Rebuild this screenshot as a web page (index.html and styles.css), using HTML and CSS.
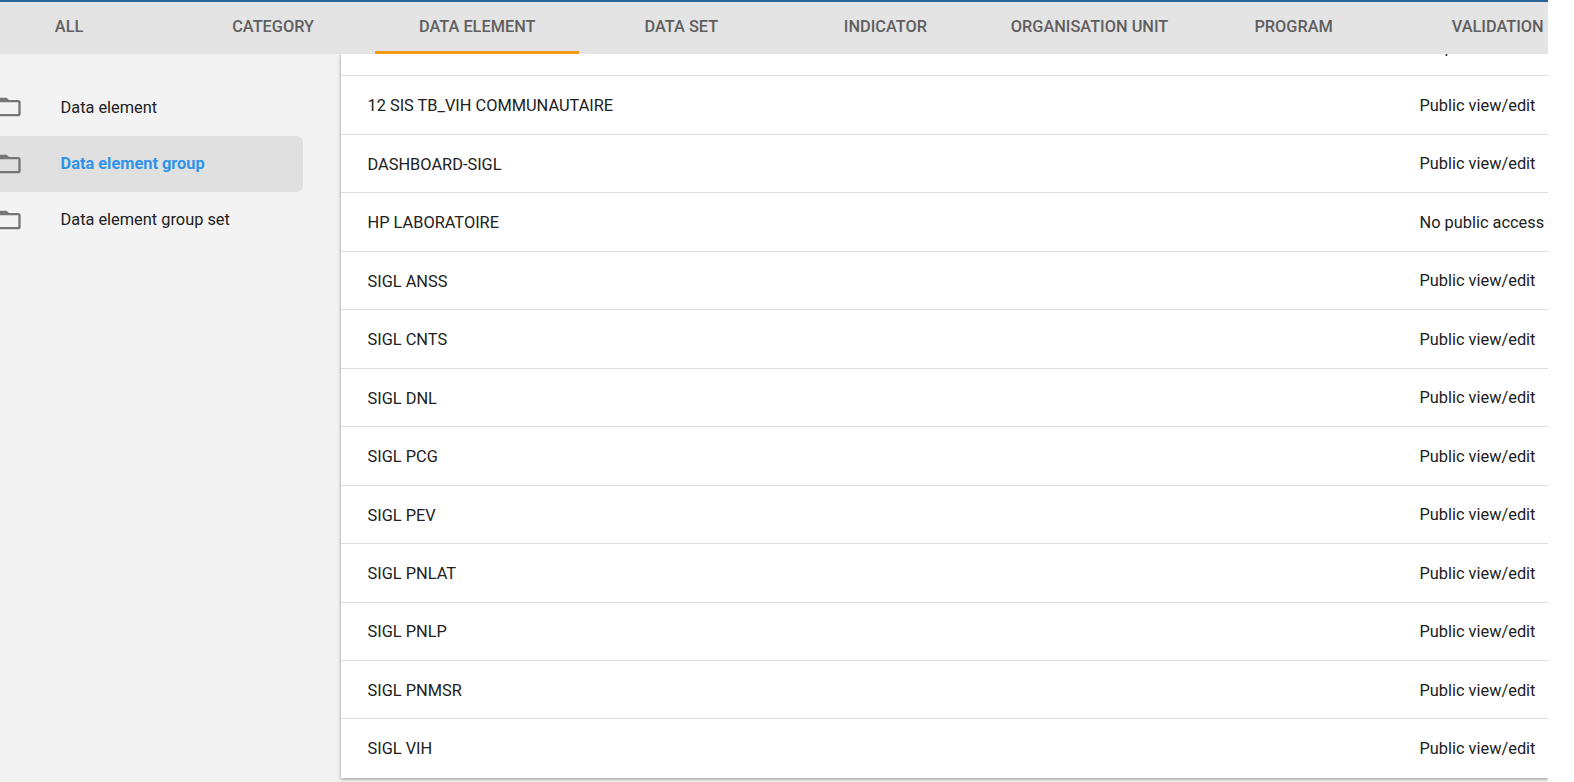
FILE: index.html
```
<!DOCTYPE html>
<html lang="en">
<head>
<meta charset="utf-8">
<title>Data element group</title>
<link rel="stylesheet" href="styles.css">
</head>
<body>
<div class="app">
  <nav class="tabs">
    <a class="tab">ALL</a>
    <a class="tab">CATEGORY</a>
    <a class="tab active">DATA ELEMENT</a>
    <a class="tab">DATA SET</a>
    <a class="tab">INDICATOR</a>
    <a class="tab">ORGANISATION UNIT</a>
    <a class="tab">PROGRAM</a>
    <a class="tab">VALIDATION</a>
  </nav>
  <div class="body">
    <aside class="sidebar">
      <a class="item"><svg class="folder" viewBox="0 0 24 24"><path d="M20 6h-8l-2-2H4c-1.100 0-1.990.9-1.990 2L2 18c0 1.100.9 2 2 2h16c1.100 0 2-.9 2-2V8c0-1.100-.9-2-2-2zm0 12H4V8h16v10z"/></svg><span class="label">Data element</span></a>
      <a class="item selected"><svg class="folder" viewBox="0 0 24 24"><path d="M20 6h-8l-2-2H4c-1.100 0-1.990.9-1.990 2L2 18c0 1.100.9 2 2 2h16c1.100 0 2-.9 2-2V8c0-1.100-.9-2-2-2zm0 12H4V8h16v10z"/></svg><span class="label">Data element group</span></a>
      <a class="item"><svg class="folder" viewBox="0 0 24 24"><path d="M20 6h-8l-2-2H4c-1.100 0-1.990.9-1.990 2L2 18c0 1.100.9 2 2 2h16c1.100 0 2-.9 2-2V8c0-1.100-.9-2-2-2zm0 12H4V8h16v10z"/></svg><span class="label">Data element group set</span></a>
    </aside>
    <main class="card">
      <div class="row"><span class="name"></span><span class="access">No public access</span></div>
      <div class="row"><span class="name">12 SIS TB_VIH COMMUNAUTAIRE</span><span class="access">Public view/edit</span></div>
      <div class="row"><span class="name">DASHBOARD-SIGL</span><span class="access">Public view/edit</span></div>
      <div class="row"><span class="name">HP LABORATOIRE</span><span class="access">No public access</span></div>
      <div class="row"><span class="name">SIGL ANSS</span><span class="access">Public view/edit</span></div>
      <div class="row"><span class="name">SIGL CNTS</span><span class="access">Public view/edit</span></div>
      <div class="row"><span class="name">SIGL DNL</span><span class="access">Public view/edit</span></div>
      <div class="row"><span class="name">SIGL PCG</span><span class="access">Public view/edit</span></div>
      <div class="row"><span class="name">SIGL PEV</span><span class="access">Public view/edit</span></div>
      <div class="row"><span class="name">SIGL PNLAT</span><span class="access">Public view/edit</span></div>
      <div class="row"><span class="name">SIGL PNLP</span><span class="access">Public view/edit</span></div>
      <div class="row"><span class="name">SIGL PNMSR</span><span class="access">Public view/edit</span></div>
      <div class="row"><span class="name">SIGL VIH</span><span class="access">Public view/edit</span></div>
    </main>
  </div>
</div>
</body>
</html>
```
FILE: styles.css
```
* { box-sizing: border-box; }
html, body { height: 782px; overflow: hidden; }
body {
  margin: 0;
  background: #fff;
  font-family: Roboto, "Liberation Sans", sans-serif;
  font-size: 16.360px;
  color: #212121;
}
.app {
  width: 1548px;
  height: 782px;
  display: flex;
  flex-direction: column;
  overflow: hidden;
  background: #f3f3f3;
}
.tabs {
  flex: none;
  height: 54px;
  border-top: 2px solid #276696;
  background: #e4e4e4;
  display: flex;
  overflow: hidden;
}
.tab {
  flex: none;
  width: 204.100px;
  padding-top: 1px;
  height: 52px;
  line-height: 48px;
  text-align: center;
  font-size: 16.340px;
  font-weight: 500;
  color: #5f5f5f;
  white-space: nowrap;
}
.tab:first-child { margin-left: -33px; }
.tab.active { border-bottom: 3px solid #f79b16; }
.body { flex: 1; min-height: 0; display: flex; align-items: flex-start; }
.sidebar { flex: none; width: 341px; padding-top: 26px; }
.item {
  display: flex;
  align-items: center;
  width: 303px;
  height: 56px;
  border-radius: 0 6px 6px 0;
  white-space: nowrap;
}
.selected { background: #e0e0e0; color: #2f93ea; font-weight: 700; }
.label { padding-bottom: 2px; }
.folder {
  flex: none;
  width: 28px;
  height: 28px;
  margin: 0 37.500px 1px -5px;
  fill: #757575;
}
.item:first-child .folder { margin-bottom: 2px; }
.card {
  flex: 1;
  height: 724px;
  display: flex;
  flex-direction: column;
  justify-content: flex-end;
  background: #fff;
  box-shadow: 0 1px 5px rgba(0,0,0,.12), 0 1px 3px rgba(0,0,0,.3);
  clip-path: inset(0 0 -6px -6px);
  overflow: hidden;
}
.row {
  flex: none;
  display: flex;
  align-items: center;
  height: 58.460px;
  border-bottom: 1px solid #dedede;
  padding-left: 26.500px;
  white-space: nowrap;
}
.row:last-child { height: 58.600px; border-bottom-color: transparent; }
.name { flex: none; width: 1052px; padding-top: 1.500px; }
.access { padding-top: .7px; }
```
